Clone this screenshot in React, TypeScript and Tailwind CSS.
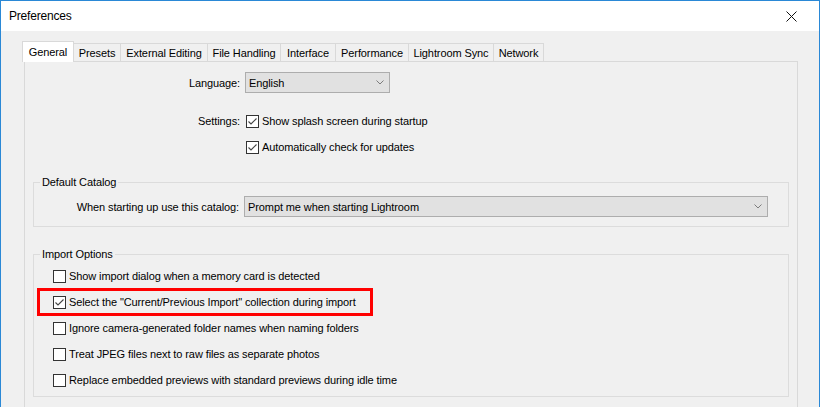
import React from "react";

const tabs = [
  { label: "Presets", w: "w-[47px]" },
  { label: "External Editing", w: "w-[87px]" },
  { label: "File Handling", w: "w-[73px]" },
  { label: "Interface", w: "w-[55px]" },
  { label: "Performance", w: "w-[73px]" },
  { label: "Lightroom Sync", w: "w-[85px]" },
  { label: "Network", w: "w-[50px]" },
];

function Check({ checked }: { checked?: boolean }) {
  return (
    <span className="w-[13px] h-[13px] border border-[#333333] bg-white flex items-center justify-center shrink-0">
      {checked && (
        <svg width="11" height="11" viewBox="0 0 11 11">
          <path d="M1.5 5.5 L4 8 L9.5 2.5" fill="none" stroke="#444444" strokeWidth="1.1" />
        </svg>
      )}
    </span>
  );
}

function Chevron() {
  return (
    <svg width="8" height="5" viewBox="0 0 8 5" className="shrink-0">
      <path d="M0.5 0.5 L4 4 L7.5 0.5" fill="none" stroke="#707070" strokeWidth="0.9" />
    </svg>
  );
}

function CheckRow({ label, checked, children }: { label: string; checked?: boolean; children?: React.ReactNode }) {
  return (
    <div className="relative h-[20px] flex items-center gap-[3px] whitespace-nowrap">
      {children}
      <Check checked={checked} />
      <span>{label}</span>
    </div>
  );
}

export default function App() {
  return (
    <div
      className="w-[820px] h-[407px] overflow-hidden flex flex-col border-l border-t border-r border-[#2a88d6] bg-[#f0f0f0] text-black text-[11px] leading-[16px] tracking-[-0.1px]"
      style={{ fontFamily: '"Liberation Sans", Arial, sans-serif' }}
    >
      <div className="h-[30px] bg-white flex items-center justify-between pl-[8px] pr-[22px] shrink-0">
        <span className="text-[12px] tracking-[-0.2px]">Preferences</span>
        <svg width="11" height="11" viewBox="0 0 11 11">
          <path d="M0.5 0.5 L10.5 10.5 M10.5 0.5 L0.5 10.5" stroke="#111111" strokeWidth="1" />
        </svg>
      </div>
      <div className="flex-1 pt-[10px] pl-[23px]">
        <div className="flex items-start h-[21px] -ml-[2px] whitespace-nowrap">
          <div className="relative z-10 w-[52px] h-[21px] bg-white border-l border-t border-r border-[#d9d9d9] flex items-center justify-center pb-[1px]">
            General
          </div>
          {tabs.map((t) => (
            <div
              key={t.label}
              className={`${t.w} mt-[2px] h-[18px] border-t border-r border-[#d9d9d9] flex items-center justify-center`}
            >
              {t.label}
            </div>
          ))}
        </div>
        <div className="-mt-px w-[774px] h-[400px] border border-[#d9d9d9] pt-[10px]">
          <div className="flex items-center gap-[5px] h-[21px]">
            <span className="w-[215px] text-right">Language:</span>
            <div className="w-[145px] h-[21px] bg-[#e1e1e1] border border-[#adadad] flex items-center justify-between pl-[3px] pr-[5px]">
              <span>English</span>
              <Chevron />
            </div>
          </div>
          <div className="mt-[18px] flex gap-[6px]">
            <span className="w-[215px] text-right h-[20px] flex items-center justify-end">Settings:</span>
            <div className="flex flex-col gap-[6px]">
              <CheckRow label="Show splash screen during startup" checked />
              <CheckRow label="Automatically check for updates" checked />
            </div>
          </div>

          <fieldset className="mt-[17px] ml-[8px] w-[756px] border border-[#dcdcdc] pb-[9px] pt-[6px]">
            <legend className="ml-[6px] px-[2px] h-[16px] leading-[16px]">Default Catalog</legend>
            <div className="flex items-center gap-[5px]">
              <span className="w-[205px] text-right">When starting up use this catalog:</span>
              <div className="w-[524px] h-[21px] bg-[#e1e1e1] border border-[#adadad] flex items-center justify-between pl-[3px] pr-[5px]">
                <span>Prompt me when starting Lightroom</span>
                <Chevron />
              </div>
            </div>
          </fieldset>

          <fieldset className="mt-[19px] ml-[8px] w-[756px] border border-[#dcdcdc] pt-[4px] pb-[6px] pl-[19px]">
            <legend className="-ml-[13px] px-[2px] h-[16px] leading-[16px]">Import Options</legend>
            <div className="flex flex-col gap-[6px]">
              <CheckRow label="Show import dialog when a memory card is detected" />
              <CheckRow label='Select the "Current/Previous Import" collection during import' checked>
                <span className="absolute -left-[16px] -top-[4px] w-[336px] h-[28px] border-[3px] border-[#ff0000]" />
              </CheckRow>
              <CheckRow label="Ignore camera-generated folder names when naming folders" />
              <CheckRow label="Treat JPEG files next to raw files as separate photos" />
              <CheckRow label="Replace embedded previews with standard previews during idle time" />
            </div>
          </fieldset>
        </div>
      </div>
    </div>
  );
}
